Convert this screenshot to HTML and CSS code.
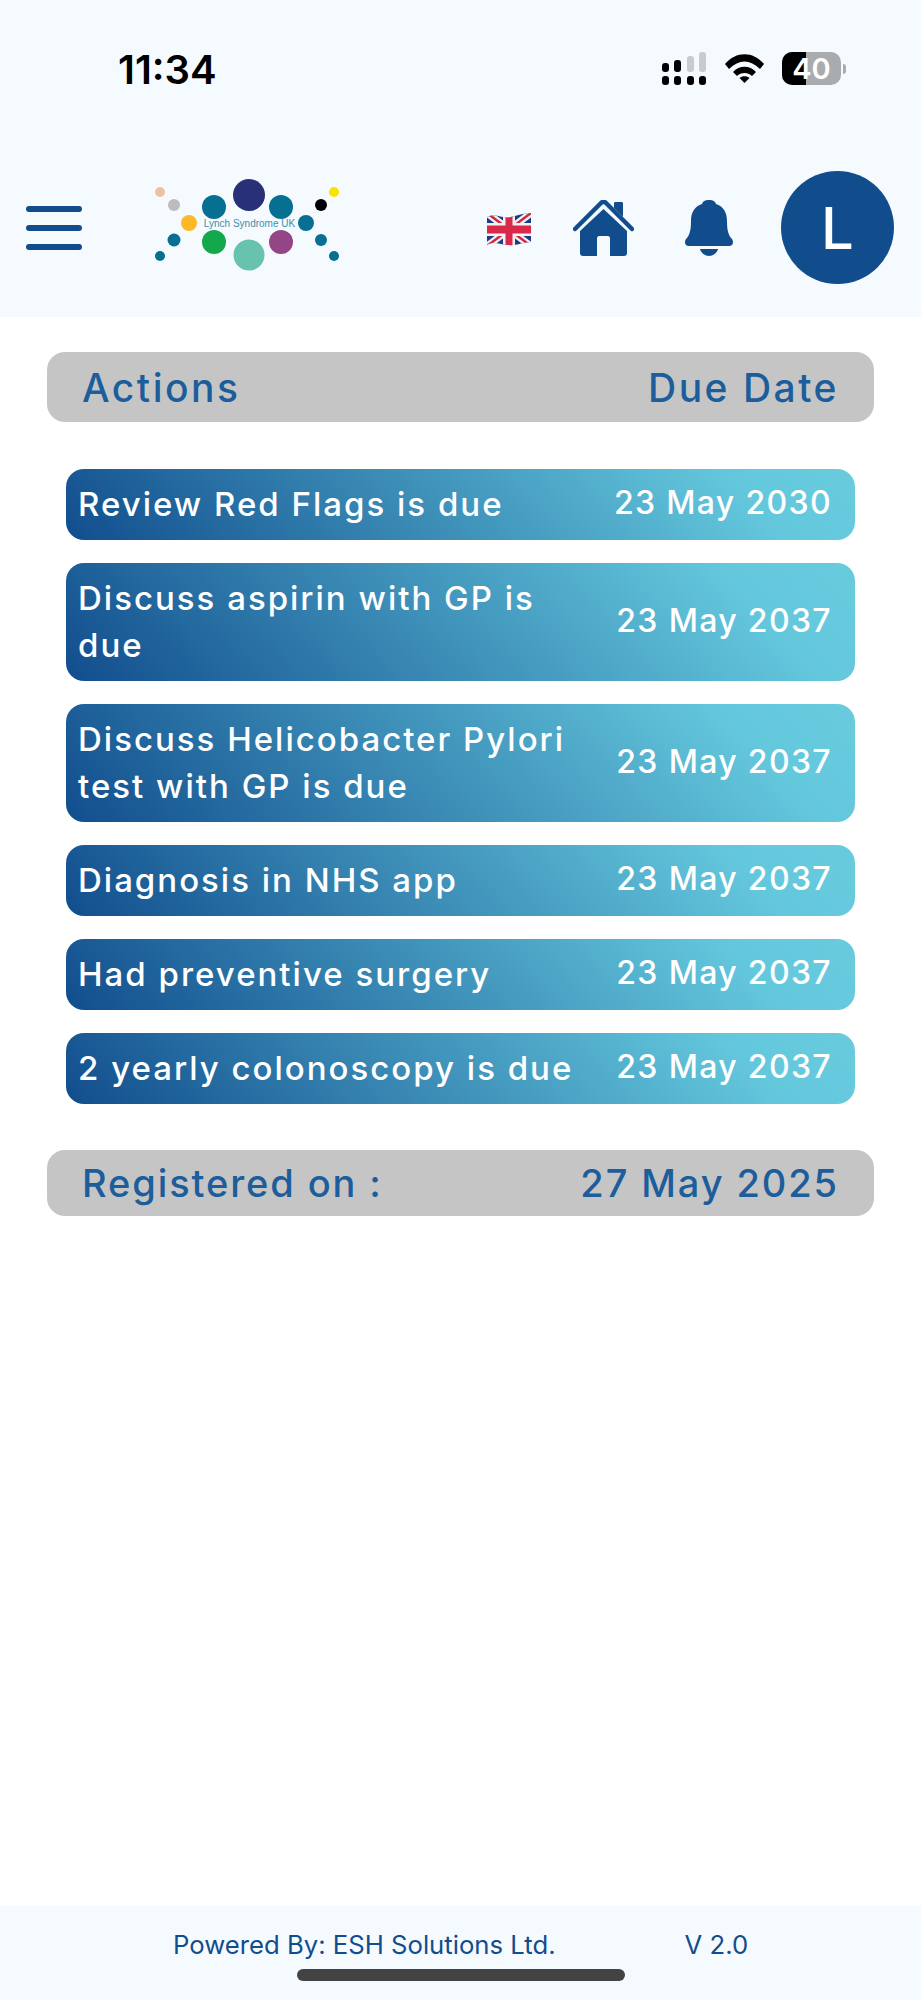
FILE: index.html
```html
<!DOCTYPE html>
<html>
<head>
    <title>Lynch Syndrome UK</title>
    <link rel="stylesheet" href="styles.css">
</head>
<body>
<div class="page">

    <div class="top">
        <div class="status">
            <span class="time">11:34</span>
            <div class="status-icons">
                <svg class="signal" width="45" height="33" viewBox="0 0 45 33">
                    <rect x="0" y="11" width="7" height="9" rx="3" fill="#000"/>
                    <rect x="12" y="8" width="7" height="12" rx="3" fill="#000"/>
                    <rect x="25" y="4" width="7" height="16" rx="3" fill="#c8cbcf"/>
                    <rect x="37" y="0" width="7" height="20" rx="3" fill="#c8cbcf"/>
                    <rect x="0" y="24" width="7" height="9" rx="3" fill="#000"/>
                    <rect x="12" y="24" width="7" height="9" rx="3" fill="#000"/>
                    <rect x="25" y="24" width="7" height="9" rx="3" fill="#000"/>
                    <rect x="37" y="24" width="7" height="9" rx="3" fill="#000"/>
                </svg>
                <svg class="wifi" width="39" height="29" viewBox="0 0 39 29">
                    <path d="M0 10 C11 -3 28 -3 39 10 L35 15 C25 5 14 5 4 15 Z" fill="#000"/>
                    <path d="M8 18 C14 11 25 11 31 18 L27 22 C23 18 16 18 12 22 Z" fill="#000"/>
                    <path d="M14.5 24 C17 21.5 22 21.5 24.5 24 L19.5 29 Z" fill="#000"/>
                </svg>
                <div class="battery">
                    <div class="battery-body">
                        <div class="battery-fill"></div>
                        <span class="battery-text">40</span>
                    </div>
                    <div class="battery-nub"></div>
                </div>
            </div>
        </div>

        <div class="nav">
            <div class="burger">
                <div class="burger-line"></div>
                <div class="burger-line"></div>
                <div class="burger-line"></div>
            </div>

            <svg class="logo" width="184" height="96" viewBox="0 0 184 96">
                <circle cx="5" cy="17" r="5" fill="#f2bfa3"/>
                <circle cx="19" cy="30" r="6" fill="#bcbcbc"/>
                <circle cx="34" cy="48" r="8" fill="#fdb827"/>
                <circle cx="59" cy="32" r="12" fill="#076f92"/>
                <circle cx="94" cy="20" r="16" fill="#283177"/>
                <circle cx="126" cy="32" r="12" fill="#076f92"/>
                <circle cx="151" cy="48" r="8" fill="#076f92"/>
                <circle cx="166" cy="30" r="6" fill="#000"/>
                <circle cx="179" cy="17" r="5" fill="#f7e500"/>
                <circle cx="19" cy="65" r="6.5" fill="#076f92"/>
                <circle cx="5" cy="81" r="5" fill="#076f92"/>
                <circle cx="59" cy="67" r="12" fill="#12a84b"/>
                <circle cx="94" cy="80" r="15.5" fill="#67c3ae"/>
                <circle cx="126" cy="67" r="12" fill="#944585"/>
                <circle cx="166" cy="65" r="6" fill="#076f92"/>
                <circle cx="179" cy="81" r="5" fill="#076f92"/>
                <text x="94.5" y="52" class="logo-text" text-anchor="middle">Lynch Syndrome UK</text>
            </svg>

            <div class="nav-right">
                <svg class="flag" width="44" height="33" viewBox="0 0 44 33">
                    <defs>
                        <clipPath id="flagClip">
                            <path d="M0 4 C10 0 14 6 24 4 C32 2 38 0 44 0 L44 29 C36 29 30 33 20 32 C12 31 6 28 0 32 Z"/>
                        </clipPath>
                    </defs>
                    <g clip-path="url(#flagClip)">
                        <rect width="44" height="33" fill="#1f3a86"/>
                        <path d="M0 0 L44 33 M44 0 L0 33" stroke="#f2f2f2" stroke-width="7"/>
                        <path d="M0 0 L44 33 M44 0 L0 33" stroke="#d3263f" stroke-width="2.5"/>
                        <rect x="16" y="0" width="12" height="33" fill="#f2f2f2"/>
                        <rect x="0" y="10" width="44" height="13" fill="#f2f2f2"/>
                        <rect x="18.5" y="0" width="7" height="33" fill="#d9294a"/>
                        <rect x="0" y="12.5" width="44" height="8" fill="#d9294a"/>
                    </g>
                </svg>
                <svg class="home" width="61" height="56" viewBox="0 0 61 56">
                    <path d="M41 8 V3 C41 2 42 2 43 2 H48 C49 2 50 2 50 3 V17 Z" fill="#114d8d"/>
                    <path d="M2 29 L28 3 C29.5 1.5 31.5 1.5 33 3 L59 29" fill="none" stroke="#114d8d" stroke-width="4.5" stroke-linecap="round"/>
                    <path d="M30.5 9 L54 31 V53 C54 55 53 56 51 56 H37 V38 C37 37 36 36 35 36 H26 C25 36 24 37 24 38 V56 H10 C8 56 7 55 7 53 V31 Z" fill="#114d8d"/>
                </svg>
                <svg class="bell" width="48" height="56" viewBox="0 0 48 56">
                    <path d="M24 0 C28 0 30 1 31 4 C38 6 42 12 42 21 C42 29 43 35 47 39 C49 42 48 46 44 46 H4 C0 46 -1 42 1 39 C5 35 6 29 6 21 C6 12 10 6 17 4 C18 1 20 0 24 0 Z" fill="#114d8d"/>
                    <path d="M15 49 H33 C32 53 28 56 24 56 C20 56 16 53 15 49 Z" fill="#114d8d"/>
                </svg>
                <div class="avatar">L</div>
            </div>
        </div>
    </div>

    <div class="content">
        <div class="bar bar-head">
            <span>Actions</span>
            <span>Due Date</span>
        </div>

        <div class="action-list">
            <div class="action">
                <div class="action-name">Review Red Flags is due</div>
                <div class="action-date">23 May 2030</div>
            </div>
            <div class="action">
                <div class="action-name">Discuss aspirin with GP is due</div>
                <div class="action-date">23 May 2037</div>
            </div>
            <div class="action">
                <div class="action-name">Discuss Helicobacter Pylori test with GP is due</div>
                <div class="action-date">23 May 2037</div>
            </div>
            <div class="action">
                <div class="action-name">Diagnosis in NHS app</div>
                <div class="action-date">23 May 2037</div>
            </div>
            <div class="action">
                <div class="action-name">Had preventive surgery</div>
                <div class="action-date">23 May 2037</div>
            </div>
            <div class="action">
                <div class="action-name">2 yearly colonoscopy is due</div>
                <div class="action-date">23 May 2037</div>
            </div>
        </div>

        <div class="bar bar-reg">
            <span>Registered on :</span>
            <span>27 May 2025</span>
        </div>
    </div>

    <div class="footer">
        <div class="footer-text">
            <span>Powered By: ESH Solutions Ltd.</span>
            <span>V 2.0</span>
        </div>
        <div class="home-bar"></div>
    </div>

</div>
</body>
</html>
```

FILE: styles.css
```css
body {
    margin: 0;
    background-color: white;
    font-family: "Inter", "Liberation Sans", sans-serif;
}

.page {
    display: flex;
    flex-direction: column;
    min-height: 2000px;
}

.top {
    background-color: #f5faff;
    height: 317px;
}

.status {
    display: flex;
    justify-content: space-between;
    align-items: center;
    padding: 52px 75px 0 118px;
    height: 33px;
}

.time {
    margin-top: 2px;
    font-size: 40px;
    font-weight: 600;
    color: black;
    line-height: 33px;
}

.status-icons {
    display: flex;
    align-items: center;
    gap: 18px;
}

.battery {
    display: flex;
    align-items: center;
    gap: 2px;
}

.battery-body {
    position: relative;
    width: 59px;
    height: 33px;
    border-radius: 10px;
    background-color: #a9acaf;
    overflow: hidden;
}

.battery-fill {
    width: 24px;
    height: 33px;
    background-color: black;
}

.battery-text {
    position: absolute;
    top: 0;
    left: 0;
    width: 59px;
    text-align: center;
    color: white;
    font-size: 29px;
    font-weight: 600;
    line-height: 33px;
}

.battery-nub {
    width: 3px;
    height: 10px;
    background-color: #a9acaf;
    border-radius: 0 3px 3px 0;
}

.nav {
    display: flex;
    align-items: center;
    padding: 0 27px 0 26px;
    margin-top: 86px;
    height: 113px;
}

.burger {
    display: flex;
    flex-direction: column;
    gap: 13px;
    width: 56px;
}

.burger-line {
    height: 6px;
    border-radius: 3px;
    background-color: #114d8d;
}

.logo {
    align-self: flex-start;
    margin: 4px 0 0 73px;
}

.logo-text {
    font-family: "Liberation Sans", sans-serif;
    font-size: 10px;
    fill: #3f8ea8;
}

.nav-right {
    display: flex;
    align-items: center;
    margin-left: auto;
}

.flag {
    margin-top: 4px;
}

.home {
    margin-left: 42px;
}

.bell {
    margin-left: 51px;
}

.avatar {
    display: flex;
    align-items: center;
    justify-content: center;
    width: 113px;
    height: 113px;
    margin-left: 48px;
    border-radius: 50%;
    background-color: #114d8d;
    color: white;
    font-size: 58px;
    font-weight: 500;
}

.content {
    padding: 35px 47px 0 47px;
}

.bar {
    display: flex;
    justify-content: space-between;
    align-items: center;
    box-sizing: border-box;
    padding: 0 35px;
    background-color: #c5c5c5;
    border-radius: 18px;
    color: #1c5d9b;
    font-weight: 500;
}

.bar-head {
    height: 70px;
    font-size: 39px;
    letter-spacing: 2.5px;
}

.bar-reg {
    height: 66px;
    margin-top: 46px;
    font-size: 38px;
    letter-spacing: 1.9px;
}

.action-list {
    display: flex;
    flex-direction: column;
    gap: 23px;
    margin: 47px 19px 0 19px;
}

.action {
    display: flex;
    align-items: center;
    justify-content: space-between;
    padding: 12px 23px 12px 12px;
    border-radius: 18px;
    background-image: linear-gradient(48deg, #114d8d 0%, #64c8dd 85%, #68cbdd 100%);
    color: white;
    font-weight: 500;
}

.action-name {
    width: 497px;
    font-size: 33px;
    font-weight: 550;
    line-height: 47px;
    letter-spacing: 2px;
}

.action-date {
    margin-top: -4px;
    font-size: 32px;
    letter-spacing: 1.35px;
    white-space: nowrap;
}

.footer {
    margin-top: auto;
    box-sizing: border-box;
    height: 94px;
    background-color: #f5faff;
}

.footer-text {
    display: flex;
    gap: 129px;
    padding: 21px 0 0 173px;
    color: #114d8d;
    font-size: 25.7px;
    line-height: 36px;
}

.home-bar {
    width: 328px;
    height: 12px;
    margin: 6px 0 0 297px;
    border-radius: 6px;
    background-color: #434343;
}
```
